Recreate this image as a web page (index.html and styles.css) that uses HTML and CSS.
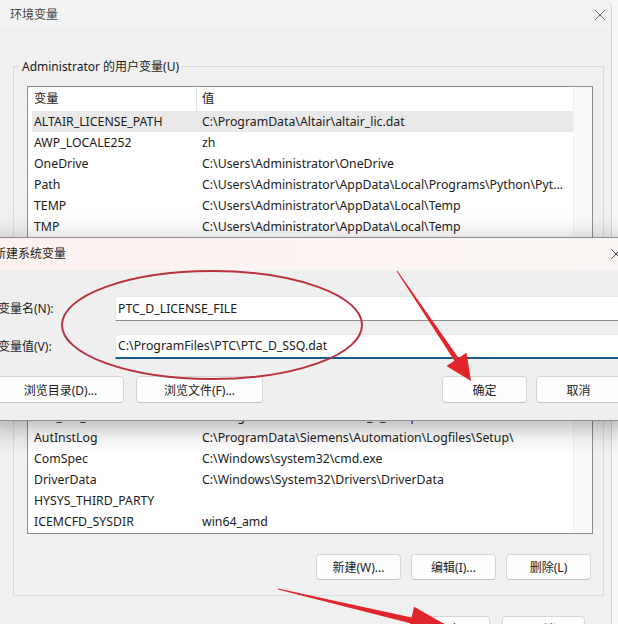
FILE: index.html
```html
<!DOCTYPE html>
<html lang="zh-CN">
<head>
<meta charset="utf-8">
<title>环境变量</title>
<link rel="stylesheet" href="styles.css">
</head>
<body>
<div class="screen">
  <div class="window">
    <div class="titlebar">
      <span class="title">环境变量</span>
      <svg class="close" width="12" height="12" viewBox="0 0 12 12"><path d="M1 1L11 11M11 1L1 11"/></svg>
    </div>
    <div class="content">
      <div class="group group-user">
        <div class="legend">Administrator 的用户变量(U)</div>
        <div class="list list-user">
          <div class="list-main">
            <div class="row header"><span class="c1">变量</span><span class="c2">值</span></div>
            <div class="row selected"><span class="c1">ALTAIR_LICENSE_PATH</span><span class="c2">C:\ProgramData\Altair\altair_lic.dat</span></div>
            <div class="row"><span class="c1">AWP_LOCALE252</span><span class="c2">zh</span></div>
            <div class="row"><span class="c1">OneDrive</span><span class="c2">C:\Users\Administrator\OneDrive</span></div>
            <div class="row"><span class="c1">Path</span><span class="c2">C:\Users\Administrator\AppData\Local\Programs\Python\Pyt...</span></div>
            <div class="row"><span class="c1">TEMP</span><span class="c2">C:\Users\Administrator\AppData\Local\Temp</span></div>
            <div class="row"><span class="c1">TMP</span><span class="c2">C:\Users\Administrator\AppData\Local\Temp</span></div>
          </div>
          <div class="scrollbar"></div>
        </div>
        <div class="btn-row">
          <button class="btn">新建(N)...</button>
          <button class="btn">编辑(E)...</button>
          <button class="btn">删除(D)</button>
        </div>
      </div>
      <div class="group group-sys">
        <div class="legend">系统变量(S)</div>
        <div class="list list-sys">
          <div class="list-main">
            <div class="row header"><span class="c1">变量</span><span class="c2">值</span></div>
            <div class="row"><span class="c1">ACAD_LICENSE</span><span class="c2">C:\Program Files\Autodesk</span></div>
            <div class="row"><span class="c1">ACS_DIR</span><span class="c2">C:\Program Files\ACS</span></div>
            <div class="row"><span class="c1">CAE_LIC_DIR</span><span class="c2">C:\Program Files\Siemens\lic_d_setup</span></div>
            <div class="row"><span class="c1">AutInstLog</span><span class="c2">C:\ProgramData\Siemens\Automation\Logfiles\Setup\</span></div>
            <div class="row"><span class="c1">ComSpec</span><span class="c2">C:\Windows\system32\cmd.exe</span></div>
            <div class="row"><span class="c1">DriverData</span><span class="c2">C:\Windows\System32\Drivers\DriverData</span></div>
            <div class="row"><span class="c1">HYSYS_THIRD_PARTY</span><span class="c2"></span></div>
            <div class="row"><span class="c1">ICEMCFD_SYSDIR</span><span class="c2">win64_amd</span></div>
          </div>
          <div class="scrollbar"></div>
        </div>
        <div class="btn-row">
          <button class="btn">新建(W)...</button>
          <button class="btn">编辑(I)...</button>
          <button class="btn">删除(L)</button>
        </div>
      </div>
      <div class="footer">
        <button class="btn">确定</button>
        <button class="btn">取消</button>
      </div>
    </div>
  </div>

  <div class="dialog">
    <div class="dlg-titlebar">
      <span class="dlg-title">新建系统变量</span>
      <svg class="dlg-close" width="10" height="10" viewBox="0 0 10 10"><path d="M0.5 0.5L9.5 9.5M9.5 0.5L0.5 9.5"/></svg>
    </div>
    <div class="dlg-body">
      <div class="form-row">
        <label class="form-label">变量名(N):</label>
        <div class="field">PTC_D_LICENSE_FILE</div>
      </div>
      <div class="form-row form-row-2">
        <label class="form-label">变量值(V):</label>
        <div class="field field-focus">C:\ProgramFiles\PTC\PTC_D_SSQ.dat</div>
      </div>
      <div class="dlg-buttons">
        <button class="btn btn-wide">浏览目录(D)...</button>
        <button class="btn btn-wide">浏览文件(F)...</button>
        <span class="spacer"></span>
        <button class="btn btn-dlg">确定</button>
        <button class="btn btn-dlg">取消</button>
      </div>
    </div>
  </div>

  <svg class="marks" width="618" height="624" viewBox="0 0 618 624">
    <ellipse cx="212" cy="325" rx="150" ry="54" fill="none" stroke="#b8323e" stroke-width="2"/>
    <polygon fill="#e0262b" points="397.4,270.7 458.6,358.0 466.5,352.7 471,381 446.5,366.1 454.4,360.8 396.6,271.3"/>
    <polygon fill="#e0262b" points="278.1,588.5 411.6,617.5 414,606.7 455,630 408,634 410.4,623.3 277.9,589.5"/>
  </svg>
</div>
</body>
</html>
```

FILE: styles.css
```css
* { box-sizing: border-box; }

html, body {
  margin: 0;
  padding: 0;
}

body {
  width: 618px;
  height: 624px;
  overflow: hidden;
  background: #f7f7f7;
  font-family: "Noto Sans", "Noto Sans CJK SC", sans-serif;
  font-size: 12px;
  color: #1b1b1b;
}

.screen {
  position: relative;
  width: 618px;
  height: 624px;
  overflow: hidden;
}

.window {
  width: 612px;
  height: 640px;
  background: #f0f0f0;
  border-right: 1px solid #d3d3d3;
  border-top-right-radius: 8px;
}

.titlebar {
  height: 30px;
  display: flex;
  align-items: center;
  justify-content: space-between;
  padding: 0 5px 0 10px;
  background: #f3f3f3;
  border-bottom: 1px solid #ececec;
  border-top-right-radius: 8px;
}

.title {
  color: #444444;
  line-height: 16px;
  padding-top: 1px;
}

.close path {
  stroke: #6a6a6a;
  stroke-width: 1;
  fill: none;
}

.content {
  padding: 36px 7px 0 13px;
}

.group {
  border: 1px solid #dadada;
  padding: 0 10px 10px 13px;
}

.group-sys {
  margin-top: 26px;
  padding-bottom: 15px;
}

.legend {
  width: fit-content;
  margin: -8px 0 0 -8px;
  padding: 0 3px;
  line-height: 16px;
  background: #f0f0f0;
  color: #1b1b1b;
}

.list {
  margin-top: 11px;
  display: flex;
  background: #ffffff;
  border: 1px solid #8c8c8c;
  overflow: hidden;
}

.list-user { height: 160px; }
.list-sys { height: 195px; }

.list-main {
  flex: 1;
  padding-left: 4px;
}

.scrollbar {
  width: 19px;
  background: #f9f9f9;
  border-left: 1px solid #f1f1f1;
}

.row {
  display: flex;
  height: 21px;
  align-items: center;
  white-space: nowrap;
  line-height: 16px;
  font-size: 12.3px;
}

.row.header {
  height: 24px;
}

.row.selected {
  background: #e9e9e9;
}

.c1 {
  width: 164px;
  flex: none;
  padding-left: 2px;
  overflow: hidden;
}

.c2 {
  padding-left: 6px;
  overflow: hidden;
}

.header .c2 {
  border-left: 1px solid #e4e4e4;
  padding-left: 5px;
  height: 24px;
  line-height: 24px;
}

.btn {
  font: inherit;
  color: #1b1b1b;
  height: 26px;
  width: 85px;
  padding: 0;
  background: #fdfdfd;
  border: 1px solid #d6d6d6;
  border-bottom-color: #c4c4c4;
  border-radius: 4px;
}

.btn-row {
  display: flex;
  justify-content: flex-end;
  gap: 10px;
  margin-top: 10px;
  padding-right: 2px;
}

.group-sys .btn-row {
  margin-top: 20px;
}

.footer {
  display: flex;
  justify-content: flex-end;
  gap: 12px;
  margin-top: 20px;
  padding-right: 19px;
}

.footer .btn {
  width: 83px;
}

/* overlay dialog */
.dialog {
  position: absolute;
  left: -15px;
  top: 237px;
  width: 648px;
  height: 184px;
  background: #f0efef;
  border: 1px solid #8d8d8d;
  box-shadow: 0 6px 26px rgba(0, 0, 0, 0.32);
}

.dlg-titlebar {
  height: 32px;
  display: flex;
  align-items: center;
  justify-content: space-between;
  padding: 0 11px 0 8px;
  background: linear-gradient(90deg, #fbf1ee 0%, #fcf4f2 50%, #faf5f4 100%);
}

.dlg-title {
  line-height: 16px;
  color: #1b1b1b;
}

.dlg-close path {
  stroke: #444;
  stroke-width: 1;
  fill: none;
}

.dlg-body {
  padding: 26px 11px 0 11px;
}

.form-row {
  display: flex;
  align-items: center;
  height: 25px;
}

.form-row-2 {
  margin-top: 13px;
}

.form-label {
  width: 118px;
  flex: none;
  padding-left: 1px;
  line-height: 16px;
}

.field {
  flex: 1;
  height: 25px;
  background: #ffffff;
  border: 1px solid #e6e6e6;
  border-bottom: 1px solid #8e8e8e;
  border-radius: 3px 3px 0 0;
  padding-left: 2px;
  line-height: 23px;
  white-space: nowrap;
  font-size: 12.3px;
}

.field-focus {
  border-bottom: 2px solid #1d5a89;
  line-height: 22px;
}

.dlg-buttons {
  display: flex;
  align-items: center;
  margin-top: 17px;
  gap: 12px;
}

.btn-wide {
  width: 127px;
  height: 27px;
}

.spacer {
  flex: 1;
}

.btn-dlg {
  height: 27px;
}

.btn-dlg + .btn-dlg {
  margin-left: -3px;
}

.marks {
  position: absolute;
  left: 0;
  top: 0;
  pointer-events: none;
}
```
